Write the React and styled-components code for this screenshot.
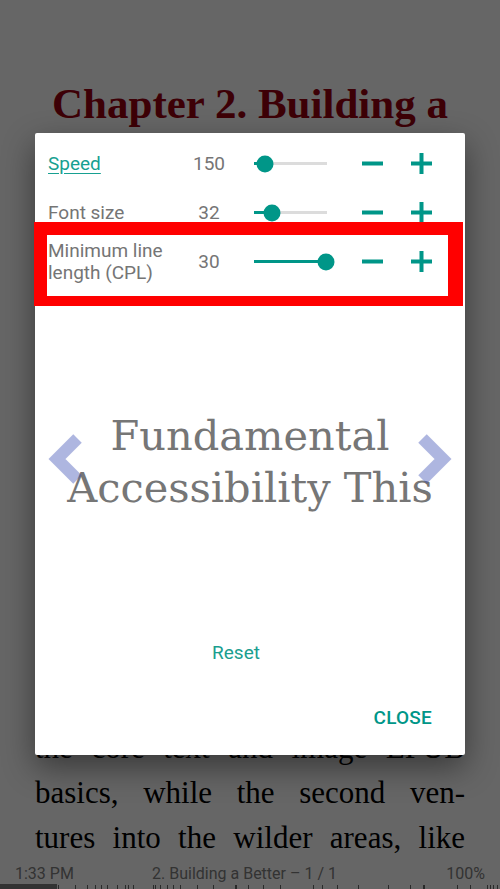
import React from "react";
import styled, { createGlobalStyle } from "styled-components";

const TEAL = "#009688";

const GlobalStyle = createGlobalStyle`
  html, body { margin: 0; padding: 0; background: #fff; }
  body { font-family: Roboto, "Liberation Sans", sans-serif; }
`;

const SETTINGS = [
  { label: "Speed", value: 150, pos: 0.15, link: true },
  { label: "Font size", value: 32, pos: 0.245 },
  { label: "Minimum line length (CPL)", value: 30, pos: 0.99 },
];

const BODY_LINES = [
  "the core text and image EPUB",
  "basics, while the second ven-",
  "tures into the wilder areas, like",
];

const TICKS = [58, 75, 87, 95, 101, 107, 117, 125, 128, 133, 153, 155, 160, 167, 173, 180, 197, 213, 235, 248, 263, 280, 313, 322, 337, 358, 388, 410, 423, 457, 470, 487, 490, 493, 497];

const Slider = ({ pos }) => (
  <SliderBox>
    <Track>
      <Fill style={{ width: `${pos * 100}%` }} />
      <Thumb style={{ left: `${pos * 100}%` }} />
    </Track>
  </SliderBox>
);

const Chevron = ({ side }) => (
  <ChevronSvg $side={side} width="40" height="60" viewBox="0 0 40 60">
    <polyline
      points={side === "left" ? "32.5,9.5 12,30 32.5,50.5" : "7.5,9.5 28,30 7.5,50.5"}
      fill="none"
      stroke="rgba(63,81,181,0.42)"
      strokeWidth="12"
      strokeLinejoin="miter"
    />
  </ChevronSvg>
);

const App = () => {
  return (
    <Root>
      <GlobalStyle />
      <Page>
        <Title>Chapter 2. Building a Better EPUB: Fundamental Accessibility</Title>
        <Body>
          {BODY_LINES.map((l, i) => (
            <Line key={i}>{l}</Line>
          ))}
        </Body>
        <StatusBar>
          <span>1:33 PM</span>
          <StatusCenter>2. Building a Better – 1 / 1</StatusCenter>
          <StatusRight>100%</StatusRight>
        </StatusBar>
        <Progress>
          <ProgressDone />
          {TICKS.map((x) => (
            <Tick key={x} $thick={x === 235 || x === 423} style={{ left: x }} />
          ))}
        </Progress>
      </Page>

      <Scrim>
        <Dialog>
          <Settings>
            {SETTINGS.map((s) => (
              <Row key={s.label}>
                <Label $link={s.link}>{s.label}</Label>
                <Value>{s.value}</Value>
                <Slider pos={s.pos} />
                <StepButton $first>
                  <svg width="21" height="21" viewBox="0 0 21 21">
                    <rect x="0" y="8.5" width="21" height="4" fill={TEAL} />
                  </svg>
                </StepButton>
                <StepButton>
                  <svg width="21" height="21" viewBox="0 0 21 21">
                    <rect x="0" y="8.5" width="21" height="4" fill={TEAL} />
                    <rect x="8.5" y="0" width="4" height="21" fill={TEAL} />
                  </svg>
                </StepButton>
              </Row>
            ))}
          </Settings>

          <Carousel>
            <Chevron side="left" />
            <Word>Fundamental Accessibility This</Word>
            <Chevron side="right" />
          </Carousel>

          <ResetRow>
            <TextButton>Reset</TextButton>
          </ResetRow>

          <Actions>
            <CloseButton>CLOSE</CloseButton>
          </Actions>

          <Highlight />
        </Dialog>
      </Scrim>
    </Root>
  );
};

const Root = styled.div`
  position: relative;
  width: 500px;
  height: 889px;
  overflow: hidden;
`;

const Page = styled.div`
  width: 500px;
  height: 889px;
  display: flex;
  flex-direction: column;
  background: #fff;
`;

const Title = styled.h1`
  margin: 0;
  padding: 79px 35px 0;
  font-family: "Liberation Serif", serif;
  font-weight: bold;
  font-size: 43px;
  line-height: 50px;
  text-align: center;
  color: #990010;
`;

const Body = styled.div`
  flex: 1;
  min-height: 0;
  overflow: hidden;
  display: flex;
  flex-direction: column;
  justify-content: flex-end;
  padding: 0 35px;
`;

const Line = styled.div`
  flex-shrink: 0;
  font-family: "Liberation Serif", serif;
  font-size: 31px;
  line-height: 45px;
  color: #000;
  text-align: justify;
  text-align-last: justify;
`;

const StatusBar = styled.div`
  display: grid;
  grid-template-columns: 1fr auto 1fr;
  padding: 4px 15px 0;
  height: 20px;
  font-size: 16px;
  line-height: 20px;
  color: #808080;
`;

const StatusCenter = styled.span`
  margin-right: 11px;
`;

const StatusRight = styled.span`
  text-align: right;
`;

const Progress = styled.div`
  position: relative;
  height: 5px;
`;

const ProgressDone = styled.div`
  width: 57px;
  height: 5px;
  background: #808080;
`;

const Tick = styled.div`
  position: absolute;
  bottom: 0;
  width: ${(p) => (p.$thick ? 2 : 1)}px;
  height: 4px;
  background: #6a6a6a;
`;

const Scrim = styled.div`
  position: absolute;
  inset: 0;
  background: rgba(0, 0, 0, 0.6);
  display: flex;
  align-items: center;
  justify-content: center;
`;

const Dialog = styled.div`
  position: relative;
  width: 430px;
  height: 622px;
  margin-top: -1px;
  background: #fff;
  border-radius: 2px;
  box-shadow: 0 12px 32px rgba(0, 0, 0, 0.45);
  display: flex;
  flex-direction: column;
`;

const Settings = styled.div`
  padding: 6px 0 0 13px;
`;

const Row = styled.div`
  display: flex;
  align-items: center;
  height: 49px;
`;

const Label = styled.div`
  width: 132px;
  font-size: 19px;
  line-height: 22px;
  color: ${(p) => (p.$link ? "#17a091" : "#757575")};
  text-decoration: ${(p) => (p.$link ? "underline" : "none")};
  text-underline-offset: 3px;
`;

const Value = styled.div`
  width: 58px;
  text-align: center;
  font-size: 19px;
  line-height: 22px;
  color: #757575;
`;

const SliderBox = styled.div`
  width: 73px;
  height: 20px;
  margin-left: 8px;
  padding: 0 8px;
  display: flex;
  align-items: center;
`;

const Track = styled.div`
  position: relative;
  width: 100%;
  height: 3px;
  background: #dcdcdc;
`;

const Fill = styled.div`
  height: 100%;
  background: ${TEAL};
`;

const Thumb = styled.div`
  position: absolute;
  top: 50%;
  width: 17px;
  height: 17px;
  border-radius: 50%;
  background: ${TEAL};
  transform: translate(-50%, -50%);
`;

const StepButton = styled.div`
  width: 48px;
  height: 40px;
  display: flex;
  align-items: center;
  justify-content: center;
  margin-left: ${(p) => (p.$first ? 13 : 1)}px;
  svg { display: block; }
`;

const Carousel = styled.div`
  position: relative;
  flex: 1;
  display: flex;
  align-items: center;
  justify-content: center;
`;

const Word = styled.div`
  max-width: 390px;
  margin-top: 6px;
  font-family: "DejaVu Serif", serif;
  font-size: 41.5px;
  line-height: 52px;
  color: #767676;
  text-align: center;
`;

const ChevronSvg = styled.svg`
  position: absolute;
  top: 143px;
  ${(p) => (p.$side === "left" ? "left: 10px;" : "right: 10px;")}
`;

const ResetRow = styled.div`
  height: 42px;
  display: flex;
  align-items: center;
  justify-content: center;
  padding-right: 28px;
`;

const TextButton = styled.span`
  font-size: 19px;
  line-height: 42px;
  color: #1a9e8f;
`;

const Actions = styled.div`
  display: flex;
  justify-content: flex-end;
  padding: 26px 33px 19px;
`;

const CloseButton = styled.span`
  font-size: 19px;
  font-weight: 500;
  line-height: 36px;
  letter-spacing: 0.2px;
  color: ${TEAL};
`;

const Highlight = styled.div`
  position: absolute;
  left: -1px;
  top: 89px;
  width: 401px;
  height: 61px;
  border-style: solid;
  border-color: #ff0000;
  border-width: 13px 15px 10px 13px;
`;

export default App;
